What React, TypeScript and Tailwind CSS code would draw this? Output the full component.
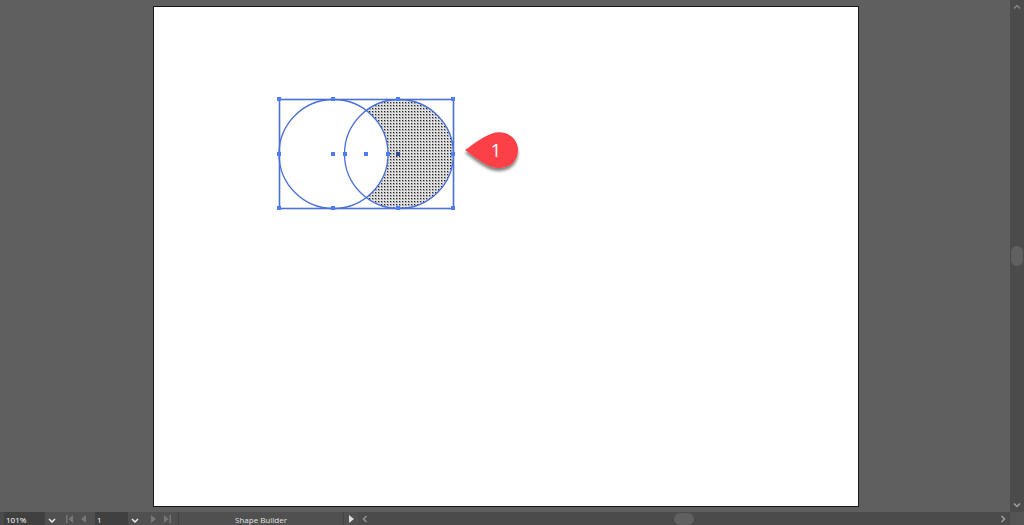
import type { ReactNode } from "react";

const handles = [
  [279, 99], [333, 99], [398, 99], [453, 99],
  [279, 154], [333, 154], [345, 154], [366, 154], [388, 154], [453, 154],
  [279, 208], [333, 208], [398, 208], [453, 208],
];

function IconButton({ label, className, children }: { label: string; className: string; children: ReactNode }) {
  return (
    <button type="button" aria-label={label} className={`flex shrink-0 items-center justify-center ${className}`}>
      {children}
    </button>
  );
}

function Chevron({ d, className }: { d: string; className: string }) {
  return (
    <svg viewBox="0 0 8 8" className={`size-2 fill-none ${className}`} strokeWidth="1.5">
      <path d={d} />
    </svg>
  );
}

function StepIcon({ d }: { d: string }) {
  return (
    <svg viewBox="0 0 8 8" className="size-2 fill-[#777777]">
      <path d={d} />
    </svg>
  );
}

function Artwork() {
  return (
    <svg viewBox="270 90 256 126" className="absolute top-[83px] left-[116px] h-[126px] w-64" aria-label="Overlapping circles">
      <defs>
        <pattern id="dots" width="3" height="3" patternUnits="userSpaceOnUse">
          <rect width="3" height="3" fill="#e2e2e2" />
          <rect width="2" height="2" fill="#a8a8a8" />
          <rect width="1" height="1" fill="#222222" />
        </pattern>
        <filter id="shadow" x="-20%" y="-20%" width="140%" height="160%">
          <feDropShadow dx="0" dy="3" stdDeviation="1.5" floodColor="#000000" floodOpacity="0.5" />
        </filter>
      </defs>
      <path d="M366.500 110.500A54.500 54.500 0 1 1 366.500 197.500A54.500 54.500 0 0 0 366.500 110.500Z" fill="url(#dots)" />
      <g fill="none" stroke="#4a70d8">
        <circle cx="333.500" cy="154" r="54.500" strokeWidth="1.300" />
        <circle cx="399" cy="154" r="54.500" strokeWidth="1.300" />
        <rect x="279.500" y="99.500" width="174" height="109" strokeWidth="1.600" />
      </g>
      {handles.map(([x, y]) => (
        <rect key={`${x}-${y}`} x={x - 2} y={y - 2} width="4" height="4" fill="#4b7df5" />
      ))}
      <rect x="396" y="152" width="4" height="4" fill="#2e4b94" />
      <path
        d="M465 150C475 143 484 136 492 133.500C506 129 518 138 518 150C518 163 506 171 492 167C483 164 475 157 465 150Z"
        fill="#fc4046"
        filter="url(#shadow)"
      />
      <text x="496" y="157" textAnchor="middle" className="fill-white font-[family-name:'Open_Sans',sans-serif] text-[19px]">
        1
      </text>
    </svg>
  );
}

function VerticalScrollbar() {
  return (
    <aside className="flex w-3.5 shrink-0 flex-col items-center justify-between bg-[#4b4b4b]">
      <IconButton label="Scroll up" className="h-3.5 w-full">
        <Chevron d="M1 5.500L4 2.500L7 5.500" className="stroke-[#858585]" />
      </IconButton>
      <div className="h-5 w-3 rounded-full bg-[#606060]" />
      <IconButton label="Scroll down" className="h-3.5 w-full">
        <Chevron d="M1 2.500L4 5.500L7 2.500" className="stroke-[#a0a0a0]" />
      </IconButton>
    </aside>
  );
}

function StatusBar() {
  return (
    <footer className="flex h-[13px] shrink-0 items-stretch overflow-hidden bg-[#4b4b4b] font-[family-name:'Open_Sans',sans-serif] text-[8px] leading-4 text-white">
      <input aria-label="Zoom level" defaultValue="101%" className="ml-1 h-4 w-[41px] bg-[#404040] px-0.5" />
      <IconButton label="Zoom presets" className="w-3.5 bg-[#505050] pt-1">
        <Chevron d="M1 2L4 5L7 2" className="stroke-[#eeeeee]" />
      </IconButton>
      <div className="flex w-9 items-center justify-center gap-1.5 bg-[#505050]">
        <IconButton label="First artboard" className="size-2">
          <StepIcon d="M0 0H1.500V8H0ZM7 0V8L2.500 4Z" />
        </IconButton>
        <IconButton label="Previous artboard" className="size-2">
          <StepIcon d="M6 0V8L1 4Z" />
        </IconButton>
      </div>
      <input aria-label="Artboard number" defaultValue="1" className="h-4 w-[33px] bg-[#404040] px-0.5" />
      <IconButton label="Choose artboard" className="w-3.5 bg-[#505050] pt-1">
        <Chevron d="M1 2L4 5L7 2" className="stroke-[#eeeeee]" />
      </IconButton>
      <div className="flex w-9 items-center justify-center gap-1.5 bg-[#505050]">
        <IconButton label="Next artboard" className="size-2">
          <StepIcon d="M2 0V8L7 4Z" />
        </IconButton>
        <IconButton label="Last artboard" className="size-2">
          <StepIcon d="M1 0V8L5.500 4ZM6.500 0H8V8H6.500Z" />
        </IconButton>
      </div>
      <div className="w-[166px] border-x border-[#444444] bg-[#505050] text-center text-[#e0e0e0]">Shape Builder</div>
      <IconButton label="Status menu" className="w-3.5 bg-[#505050]">
        <svg viewBox="0 0 8 8" className="size-2 fill-[#dddddd]">
          <path d="M2 0V8L7 4Z" />
        </svg>
      </IconButton>
      <div className="flex flex-1 items-center justify-between">
        <IconButton label="Scroll left" className="h-full w-3.5">
          <Chevron d="M5.500 1L2.500 4L5.500 7" className="stroke-[#929292]" />
        </IconButton>
        <div className="h-3 w-5 rounded-full bg-[#606060]" />
        <IconButton label="Scroll right" className="h-full w-3.5">
          <Chevron d="M2.500 1L5.500 4L2.500 7" className="stroke-[#a0a0a0]" />
        </IconButton>
      </div>
      <div className="w-3.5 bg-[#555555]" />
    </footer>
  );
}

export default function App() {
  return (
    <div className="flex h-screen flex-col overflow-hidden bg-[#5f5f5f]">
      <div className="flex min-h-0 flex-1">
        <main className="flex flex-1 pt-1.5 pr-[151px] pb-[5px] pl-[153px]">
          <div className="relative flex-1 border border-[#181818] bg-white">
            <Artwork />
          </div>
        </main>
        <VerticalScrollbar />
      </div>
      <StatusBar />
    </div>
  );
}
